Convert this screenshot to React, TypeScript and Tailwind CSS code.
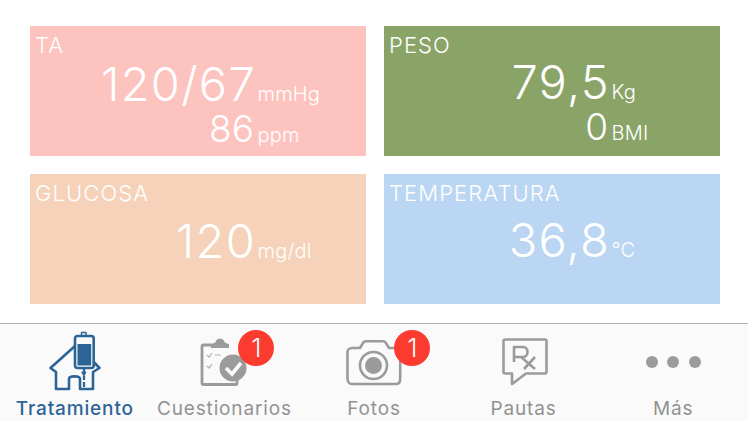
import React from 'react';

const SANS = "font-['Inter','Liberation_Sans',sans-serif]";

type Row = { value: string; unit: string; big?: boolean };

interface CardProps {
  label: string;
  color: string;
  bodyClass: string;
  rows: Row[];
}

const Card = ({ label, color, bodyClass, rows }: CardProps) => (
  <div className={`${color} h-[130px] pl-[5px] pt-[6px] text-white font-[350]`}>
    <p className="text-[22px] leading-[26px] tracking-[1.1px]">{label}</p>
    <div className={bodyClass}>
      {rows.map((r) => (
        <div key={r.value} className="flex items-baseline">
          <span className={`w-[221px] shrink-0 text-right ${r.big ? 'text-[47px] leading-[52px] tracking-[1.3px]' : 'pr-[2px] text-[37px] leading-[38px]'}`}>
            {r.value}
          </span>
          <span className="ml-[1.5px] text-[20px] tracking-[0.2px]">{r.unit}</span>
        </div>
      ))}
    </div>
  </div>
);

const Badge = ({ className }: { className: string }) => (
  <span className={`absolute ${className} flex h-[36px] w-[36px] items-center justify-center rounded-full bg-[#fb3a30] text-[26px] font-light leading-none text-white`}>
    1
  </span>
);

const HomeIcon = () => (
  <svg width="52" height="60" viewBox="0 0 52 60" fill="none" stroke="#2c6496" strokeWidth="2.6" strokeLinejoin="round" strokeLinecap="round">
    <path d="M26 15 L1.5 37 L7 41 V58 H20 V48 C20 44.5 31 44.5 31 48 V58 H44 V41 L50.5 37 L44.7 31" />
    <rect x="26" y="5" width="18.7" height="32" rx="2.5" fill="#fafafa" />
    <rect x="28.5" y="13" width="13.7" height="21.5" fill="#2c6496" stroke="none" />
    <path d="M32.5 1.5 H37 V5 H32.5 Z" strokeWidth="1.4" />
    <path d="M35 37 V43 M35 45 V49 M35 51 V56" strokeWidth="2.2" strokeLinecap="butt" />
    <path d="M33 41 H37 L35 45 Z" fill="#2c6496" strokeWidth="1" />
  </svg>
);

const ChecklistIcon = () => (
  <svg width="48" height="50" viewBox="0 0 48 50" fill="none" stroke="#9b9b9b" strokeWidth="2.8">
    <path d="M12 8 H3.5 A1.5 1.5 0 0 0 2 9.5 V46 A1.5 1.5 0 0 0 3.5 47.5 H35.5 A1.5 1.5 0 0 0 37 46 V42" />
    <path d="M11 11 V7 C14 6 15 6 16 4 C17 0.5 23 0.5 24 4 C25 6 26 6 29 7 V11 Z" fill="#9b9b9b" stroke="none" />
    <path d="M7 18 L9 20 L12 16 M15 18 H21 M7 29 L9 31 L12 27" strokeWidth="1.2" stroke="#b0b0b0" />
    <circle cx="33" cy="31" r="13.5" fill="#9b9b9b" stroke="none" />
    <path d="M26 31 L32 37 L41 26" stroke="#fafafa" strokeWidth="3.6" />
  </svg>
);

const CameraIcon = () => (
  <svg width="56" height="46" viewBox="0 0 56 46" fill="none" stroke="#9b9b9b" strokeWidth="2.6" strokeLinejoin="round">
    <path d="M6 8 H14 L17 3 C18 1.5 19 1.2 20 1.2 H37 C38.5 1.2 39 2 40 3 L43 8 H50 C52.5 8 54.2 10 54.2 12 V39 C54.2 42 52.5 44 50 44 H6 C3.5 44 1.5 42 1.5 39 V12 C1.5 10 3.5 8 6 8 Z" />
    <circle cx="27.5" cy="25.5" r="13.5" />
    <circle cx="27.5" cy="25.5" r="8.5" fill="#9b9b9b" stroke="none" />
  </svg>
);

const RxIcon = () => (
  <svg width="46" height="48" viewBox="0 0 46 48" fill="none" stroke="#9b9b9b" strokeWidth="2.6" strokeLinejoin="round">
    <path d="M3 1.5 H43 A1.5 1.5 0 0 1 44.5 3 V34 A1.5 1.5 0 0 1 43 35.5 H24 L10 46 V35.5 H3 A1.5 1.5 0 0 1 1.5 34 V3 A1.5 1.5 0 0 1 3 1.5 Z" />
    <path d="M12 24 V9 H21 C27 9 27 19 21 19 H12 M19 19 L33 31 M33 19 L22 31" strokeWidth="2.6" />
  </svg>
);

interface TabProps {
  label: string;
  active?: boolean;
  icon: React.ReactNode;
  iconClass: string;
  badge?: string;
}

const Tab = ({ label, active, icon, iconClass, badge }: TabProps) => (
  <div className="flex flex-1 flex-col items-center">
    <div className="relative h-[73px]">
      <div className={iconClass}>{icon}</div>
      {badge && <Badge className={badge} />}
    </div>
    <span className={`text-[19px] leading-[24px] tracking-[0.85px] ${active ? 'font-medium text-[#2c6496]' : 'text-[#929292]'}`}>
      {label}
    </span>
  </div>
);

export default function App() {
  return (
    <div className={`${SANS} flex h-[421px] w-[748px] flex-col overflow-hidden bg-white`}>
      <main className="grid flex-1 grid-cols-2 content-start gap-[18px] pl-[30px] pr-[28px] pt-[26px]">
        <Card
          label="TA"
          color="bg-[#fdc3bf]"
          bodyClass="mt-0"
          rows={[
            { value: '120/67', unit: 'mmHg', big: true },
            { value: '86', unit: 'ppm' },
          ]}
        />
        <Card
          label="PESO"
          color="bg-[#8aa468]"
          bodyClass="mt-[-2px]"
          rows={[
            { value: '79,5', unit: 'Kg', big: true },
            { value: '0', unit: 'BMI' },
          ]}
        />
        <Card
          label="GLUCOSA"
          color="bg-[#f5d2b9]"
          bodyClass="mt-[9px]"
          rows={[{ value: '120', unit: 'mg/dl', big: true }]}
        />
        <Card
          label="TEMPERATURA"
          color="bg-[#bad6f3]"
          bodyClass="mt-[8px]"
          rows={[{ value: '36,8', unit: '°C', big: true }]}
        />
      </main>
      <nav className="flex h-[98px] border-t border-[#b4b4b4] bg-[#fafafa]">
        <Tab label="Tratamiento" active icon={<HomeIcon />} iconClass="pt-[7px]" />
        <Tab label="Cuestionarios" icon={<ChecklistIcon />} iconClass="pt-[13px]" badge="right-[-26px] top-[6px]" />
        <Tab label="Fotos" icon={<CameraIcon />} iconClass="ml-[1px] pt-[16px]" badge="right-[-28px] top-[6px]" />
        <Tab label="Pautas" icon={<RxIcon />} iconClass="ml-[3px] pt-[14px]" />
        <Tab
          label="Más"
          iconClass="pt-[32px]"
          icon={
            <div className="flex gap-[9.5px]">
              <span className="h-[12px] w-[12px] rounded-full bg-[#9b9b9b]" />
              <span className="h-[12px] w-[12px] rounded-full bg-[#9b9b9b]" />
              <span className="h-[12px] w-[12px] rounded-full bg-[#9b9b9b]" />
            </div>
          }
        />
      </nav>
    </div>
  );
}
